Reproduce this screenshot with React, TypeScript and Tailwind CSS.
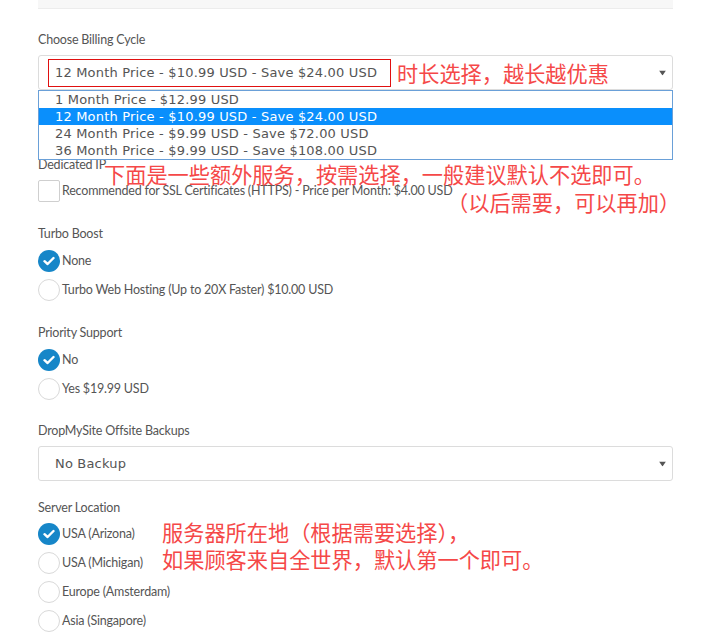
import React from "react";

const labelCls = "text-[12.5px] tracking-[-0.2px] leading-[20px] text-[#555]";
const lato = { fontFamily: "Lato, 'Open Sans', sans-serif" } as React.CSSProperties;
const optCls = "font-['DejaVu_Sans',sans-serif] text-[13px] tracking-[0.18px]";

function Arrow() {
  return (
    <svg width="7" height="5" viewBox="0 0 7 5" className="absolute right-[6px] top-1/2 -translate-y-1/2">
      <path d="M0 0 L7 0 L3.5 5 Z" fill="#555" />
    </svg>
  );
}

function Radio({ checked, label }: { checked?: boolean; label: string }) {
  return (
    <div className="flex items-center h-[22px]">
      {checked ? (
        <div className="w-[22px] h-[22px] rounded-full bg-[#1686c8] flex items-center justify-center shrink-0">
          <svg width="12" height="10" viewBox="0 0 12 10">
            <path d="M1.5 5.2 L4.6 8 L10.5 2" stroke="#fff" strokeWidth="2.4" fill="none" strokeLinecap="round" strokeLinejoin="round" />
          </svg>
        </div>
      ) : (
        <div className="w-[22px] h-[22px] rounded-full border border-[#d9d9d9] bg-white shrink-0" />
      )}
      <span className={`${labelCls} ml-[2px]`}>{label}</span>
    </div>
  );
}

const cjk = "font-['Noto_Sans_CJK_SC',sans-serif] text-[21.2px] text-[#f54848] leading-[27px] whitespace-nowrap";

export default function App() {
  return (
    <div className="w-[703px] h-[642px] bg-white overflow-hidden relative" style={lato}>
      <div className="ml-[38px] mr-[30px]">
        <div className="h-[9px] bg-[#f7f7f7] border-b border-[#ececec]" />

        <div className={`${labelCls} mt-[21px]`}>Choose Billing Cycle</div>
        <div className="relative mt-[5px] h-[35px] border border-[#dcdcdc] rounded-[3px] bg-white flex items-center">
          <span className={`pl-[16px] text-[#555] ${optCls}`}>
            12 Month Price - $10.99 USD - Save $24.00 USD
          </span>
          <div className="absolute left-[9px] top-[3px] w-[343px] h-[28px] border border-[#e01010]" />
          <span className={`absolute left-[358px] top-[3px] ${cjk}`}>时长选择，越长越优惠</span>
          <Arrow />
          <div className={`absolute left-[-1px] right-[-1px] top-[34px] border border-[#6aa0d8] bg-white z-10 ${optCls}`}>
            <div className="h-[17px] leading-[17px] pl-[16px] text-[#555]">1 Month Price - $12.99 USD</div>
            <div className="h-[17px] leading-[17px] pl-[16px] text-white bg-[#0a8ffc]">12 Month Price - $10.99 USD - Save $24.00 USD</div>
            <div className="h-[17px] leading-[17px] pl-[16px] text-[#555]">24 Month Price - $9.99 USD - Save $72.00 USD</div>
            <div className="h-[17px] leading-[17px] pl-[16px] text-[#555]">36 Month Price - $9.99 USD - Save $108.00 USD</div>
          </div>
        </div>

        <div className="relative">
          <div className={`${labelCls} mt-[65px]`}>Dedicated IP</div>
          <div className="flex items-center h-[22px] mt-[5px]">
            <div className="w-[22px] h-[22px] border border-[#cfcfcf] rounded-[2px] bg-white shrink-0" />
            <span className={`${labelCls} ml-[2px]`}>Recommended for SSL Certificates (HTTPS) - Price per Month: $4.00 USD</span>
          </div>
          <div className={`absolute left-[66px] top-[5px] ${cjk}`}>下面是一些额外服务，按需选择，一般建议默认不选即可。</div>
          <div className={`absolute left-[409px] top-[33px] ${cjk}`}>（以后需要，可以再加）</div>
        </div>

        <div className={`${labelCls} mt-[22px]`}>Turbo Boost</div>
        <div className="flex flex-col gap-[7px] mt-[6px]">
          <Radio checked label="None" />
          <Radio label="Turbo Web Hosting (Up to 20X Faster) $10.00 USD" />
        </div>

        <div className={`${labelCls} mt-[22px]`}>Priority Support</div>
        <div className="flex flex-col gap-[7px] mt-[6px]">
          <Radio checked label="No" />
          <Radio label="Yes $19.99 USD" />
        </div>

        <div className={`${labelCls} mt-[21px]`}>DropMySite Offsite Backups</div>
        <div className="relative mt-[5px] h-[35px] border border-[#dcdcdc] rounded-[3px] bg-white flex items-center">
          <span className={`pl-[16px] text-[#555] ${optCls}`}>No Backup</span>
          <Arrow />
        </div>

        <div className="relative">
          <div className={`${labelCls} mt-[17px]`}>Server Location</div>
          <div className="flex flex-col gap-[7px] mt-[5px]">
            <Radio checked label="USA (Arizona)" />
            <Radio label="USA (Michigan)" />
            <Radio label="Europe (Amsterdam)" />
            <Radio label="Asia (Singapore)" />
          </div>
          <div className={`absolute left-[124px] top-[20px] ${cjk}`}>
            <div>服务器所在地（根据需要选择），</div>
            <div>如果顾客来自全世界，默认第一个即可。</div>
          </div>
        </div>
      </div>
    </div>
  );
}
